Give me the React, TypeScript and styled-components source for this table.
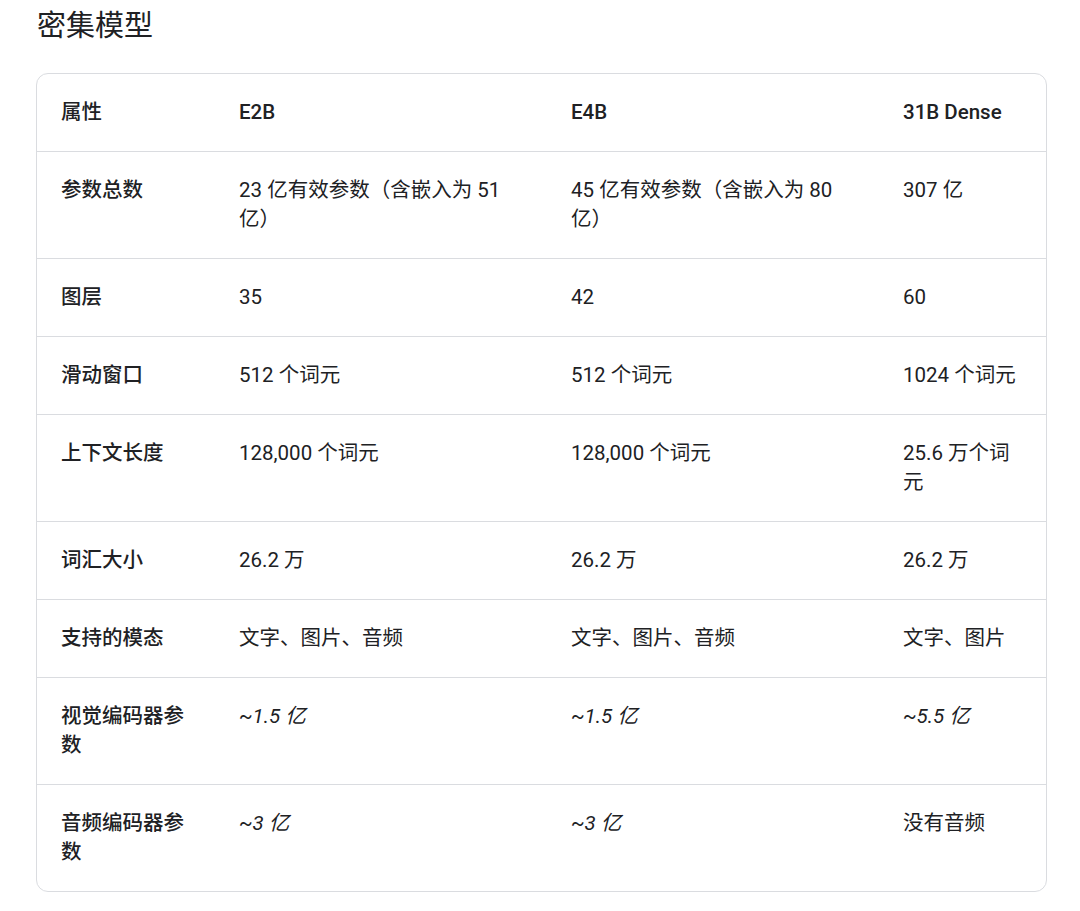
import React from 'react';
import styled, { createGlobalStyle } from 'styled-components';

const GlobalStyle = createGlobalStyle`
  html, body {
    margin: 0;
    padding: 0;
    background: #ffffff;
  }
  body {
    font-family: Roboto, "Noto Sans CJK SC", sans-serif;
    color: #202124;
  }
`;

const Page = styled.div`
  padding: 6px 33px 0 36px;
  width: 1080px;
  box-sizing: border-box;
`;

const Title = styled.h2`
  margin: 0 0 27px 1px;
  font-size: 29px;
  line-height: 40px;
  font-weight: 400;
  color: #202124;
`;

const TableFrame = styled.div`
  border: 1px solid #dadce0;
  border-radius: 12px;
  overflow: hidden;
  width: 1011px;
  box-sizing: border-box;
`;

const Table = styled.table`
  width: 100%;
  border-collapse: collapse;
  table-layout: fixed;

  tbody tr:last-child {
    border-bottom: none;
  }
`;

const Row = styled.tr`
  border-bottom: 1px solid #dadce0;
`;

const Cell = styled.td<{ $head?: boolean }>`
  padding: 24px 24px 24px 24px;
  font-size: 20.5px;
  line-height: 29px;
  font-weight: ${({ $head }) => ($head ? 500 : 400)};
  vertical-align: top;
  text-align: left;
  color: #202124;
`;

const Approx = styled.em`
  font-style: italic;
`;

type Value = string | { approx: string };

const headers = ['属性', 'E2B', 'E4B', '31B Dense'];

const rows: [string, Value, Value, Value][] = [
  ['参数总数', '23 亿有效参数（含嵌入为 51 亿）', '45 亿有效参数（含嵌入为 80 亿）', '307 亿'],
  ['图层', '35', '42', '60'],
  ['滑动窗口', '512 个词元', '512 个词元', '1024 个词元'],
  ['上下文长度', '128,000 个词元', '128,000 个词元', '25.6 万个词元'],
  ['词汇大小', '26.2 万', '26.2 万', '26.2 万'],
  ['支持的模态', '文字、图片、音频', '文字、图片、音频', '文字、图片'],
  ['视觉编码器参数', { approx: '~1.5 亿' }, { approx: '~1.5 亿' }, { approx: '~5.5 亿' }],
  ['音频编码器参数', { approx: '~3 亿' }, { approx: '~3 亿' }, '没有音频'],
];

const renderValue = (v: Value) => (typeof v === 'string' ? v : <Approx>{v.approx}</Approx>);

const App: React.FC = () => {
  return (
    <Page>
      <GlobalStyle />
      <Title>密集模型</Title>
      <TableFrame>
        <Table>
          <colgroup>
            <col style={{ width: 178 }} />
            <col style={{ width: 332 }} />
            <col style={{ width: 332 }} />
            <col />
          </colgroup>
          <thead>
            <Row>
              {headers.map((h) => (
                <Cell as="th" $head key={h}>
                  {h}
                </Cell>
              ))}
            </Row>
          </thead>
          <tbody>
            {rows.map(([label, a, b, c]) => (
              <Row key={label}>
                <Cell as="th" $head>
                  {label}
                </Cell>
                <Cell>{renderValue(a)}</Cell>
                <Cell>{renderValue(b)}</Cell>
                <Cell>{renderValue(c)}</Cell>
              </Row>
            ))}
          </tbody>
        </Table>
      </TableFrame>
    </Page>
  );
};

export default App;
